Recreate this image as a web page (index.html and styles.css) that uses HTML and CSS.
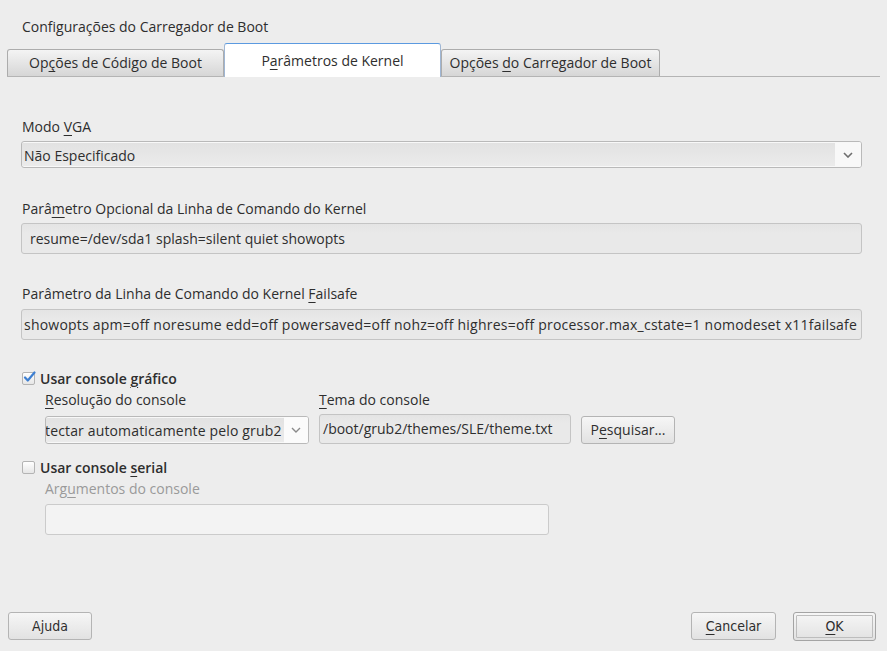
FILE: index.html
```html
<!DOCTYPE html>
<html lang="pt">
<head>
<meta charset="utf-8">
<title>Configurações do Carregador de Boot</title>
<link rel="stylesheet" href="styles.css">
</head>
<body>
<div class="dialog">
  <div class="title">Configurações do Carregador de Boot</div>
  <div class="tabs">
    <div class="tab">Op<u>ç</u>ões de Código de Boot</div>
    <div class="tab active">P<u>a</u>râmetros de Kernel</div>
    <div class="tab">Opções <u>d</u>o Carregador de Boot</div>
  </div>
  <div class="content">
    <div class="label l-vga">Modo <u>V</u>GA</div>
    <div class="combo combo-wide">
      <span class="combo-text">Não Especificado</span>
      <span class="combo-arrow"><svg width="10" height="6" viewBox="0 0 10 6"><path d="M1 1 L5 5 L9 1" fill="none" stroke="#6e6e6e" stroke-width="1.6"/></svg></span>
    </div>
    <div class="label l-opt">Parâ<u>m</u>etro Opcional da Linha de Comando do Kernel</div>
    <div class="field">resume=/dev/sda1 splash=silent quiet showopts</div>
    <div class="label l-fail">Parâmetro da Linha de Comando do Kernel <u>F</u>ailsafe</div>
    <div class="field field-fail">showopts apm=off noresume edd=off powersaved=off nohz=off highres=off processor.max_cstate=1 nomodeset x11failsafe</div>

    <div class="check l-gfx">
      <span class="box"><svg width="14" height="14" viewBox="0 0 14 14"><path d="M3 7.5 L5.8 10.5 L12.5 2.5" fill="none" stroke="#3d7fd1" stroke-width="2.2" stroke-linecap="round" stroke-linejoin="round"/></svg></span>
      <span class="check-text">Usar console <u>g</u>ráfico</span>
    </div>
    <div class="sub">
      <div class="sub-row labels">
        <div class="col-res"><u>R</u>esolução do console</div>
        <div class="col-theme"><u>T</u>ema do console</div>
      </div>
      <div class="sub-row controls">
        <div class="combo combo-res">
          <span class="combo-text clip"><span class="shift">tectar automaticamente pelo grub2</span></span>
          <span class="combo-arrow"><svg width="10" height="6" viewBox="0 0 10 6"><path d="M1 1 L5 5 L9 1" fill="none" stroke="#8a8a8a" stroke-width="1.4"/></svg></span>
        </div>
        <div class="field field-theme">/boot/grub2/themes/SLE/theme.txt</div>
        <div class="btn btn-search">P<u>e</u>squisar...</div>
      </div>
    </div>

    <div class="check l-serial">
      <span class="box"></span>
      <span class="check-text">Usar console <u>s</u>erial</span>
    </div>
    <div class="sub">
      <div class="label disabled l-args">Arg<u>u</u>mentos do console</div>
      <div class="field field-args"></div>
    </div>
  </div>
  <div class="footer">
    <div class="btn fbtn btn-help">Ajuda</div>
    <div class="spacer"></div>
    <div class="btn fbtn btn-cancel"><u>C</u>ancelar</div>
    <div class="btn fbtn btn-ok"><span class="ok-inner"><u>O</u>K</span></div>
  </div>
</div>
</body>
</html>
```
FILE: styles.css
```css
html, body {
  margin: 0;
  padding: 0;
  background: #ededed;
}
body {
  font-family: "Open Sans", "DejaVu Sans", sans-serif;
  font-size: 14px;
  color: #2e2e2e;
}
u {
  text-decoration: underline;
  text-underline-offset: 3px;
  text-decoration-thickness: 1px;
}
.dialog {
  height: 651px;
  display: flex;
  flex-direction: column;
  box-sizing: border-box;
}
.title {
  margin: 18px 0 0 22px;
  line-height: 18px;
  height: 18px;
}
.tabs {
  display: flex;
  align-items: flex-end;
  margin: 7px 7px 0 7px;
  height: 33px;
  border-bottom: 1px solid #b4b4b4;
}
.tab {
  box-sizing: border-box;
  width: 217px;
  height: 27px;
  line-height: 26px;
  text-align: center;
  background: linear-gradient(#f4f4f4, #d6d6d6);
  border: 1px solid #acacac;
  border-bottom: none;
  border-radius: 3px 3px 0 0;
  white-space: nowrap;
}
.tab:last-child {
  width: 219px;
}
.tab.active {
  height: 34px;
  line-height: 34px;
  margin-bottom: -1px;
  background: #ffffff;
  border-color: #9fb6d4;
  border-top: 1px solid #5b9ae0;
}
.content {
  display: flex;
  flex-direction: column;
  padding: 0 25px 0 21px;
}
.label {
  line-height: 18px;
  height: 18px;
  margin-left: 1px;
}
.l-vga { margin-top: 41px; }
.l-opt { margin-top: 32px; }
.l-fail { margin-top: 31px; }
.combo {
  display: flex;
  box-sizing: border-box;
  border: 1px solid #b9b9b9;
  border-radius: 3px;
  background: #f8f8f8;
  overflow: hidden;
}
.combo-wide {
  margin-top: 5px;
  height: 27px;
}
.combo-text {
  flex: 1;
  background: linear-gradient(#e2e2e2, #ebebeb);
  line-height: 25px;
  padding-left: 2px;
  white-space: nowrap;
  margin: 1px 0;
}
.combo-arrow {
  width: 26px;
  display: flex;
  align-items: center;
  justify-content: center;
  background: #f8f8f8;
}
.field {
  box-sizing: border-box;
  margin-top: 5px;
  height: 31px;
  line-height: 29px;
  padding-left: 8px;
  border: 1px solid #c4c4c4;
  border-radius: 3px;
  background: linear-gradient(#e4e4e4, #e9e9e9 30%, #e9e9e9);
  white-space: nowrap;
  overflow: hidden;
}
.field-fail {
  margin-top: 6px;
  padding-left: 2px;
  letter-spacing: 0.22px;
}
.check {
  display: flex;
  align-items: center;
  height: 18px;
  margin-left: 1px;
}
.l-gfx { margin-top: 29px; }
.l-serial { margin-top: 14px; }
.box {
  box-sizing: border-box;
  width: 13px;
  height: 13px;
  border: 1px solid #b4b4b4;
  border-radius: 2px;
  background: linear-gradient(#ffffff, #e6e6e6);
  margin-right: 5px;
  position: relative;
}
.box svg {
  position: absolute;
  left: -1px;
  top: -3px;
}
.check-text {
  font-weight: 600;
}
.sub {
  display: flex;
  flex-direction: column;
  margin-left: 24px;
}
.sub-row {
  display: flex;
}
.sub-row.labels {
  margin-top: 4px;
  height: 18px;
  line-height: 18px;
}
.col-res {
  width: 274px;
}
.sub-row.controls {
  margin-top: 5px;
  align-items: flex-start;
}
.combo-res {
  width: 264px;
  height: 28px;
  margin-top: 2px;
}
.combo-res .combo-text {
  line-height: 26px;
  overflow: hidden;
  padding-left: 0;
  letter-spacing: 0.15px;
}
.shift {
  display: inline-block;
  margin-left: -1px;
}
.combo-res .combo-arrow {
  width: 24px;
  background: #fbfbfb;
}
.field-theme {
  margin: 0 0 0 10px;
  width: 252px;
  height: 30px;
  padding-left: 3px;
  line-height: 28px;
}
.btn {
  box-sizing: border-box;
  border: 1px solid #b4b4b4;
  border-radius: 3px;
  background: linear-gradient(#f6f6f6, #e2e2e2);
  text-align: center;
  white-space: nowrap;
}
.btn-search {
  margin: 2px 0 0 10px;
  width: 94px;
  height: 28px;
  line-height: 26px;
}
.disabled {
  color: #9a9a9a;
}
.l-args {
  margin-top: 4px;
  margin-left: 0;
}
.field-args {
  margin-top: 6px;
  width: 504px;
  height: 31px;
  background: #f3f3f3;
  border-color: #cbcbcb;
}
.footer {
  margin-top: auto;
  display: flex;
  align-items: flex-start;
  padding: 0 11px 10px 8px;
  height: 29px;
}
.spacer {
  flex: 1;
}
.fbtn {
  font-family: "Liberation Sans Narrow", "DejaVu Sans Condensed", "DejaVu Sans", sans-serif;
  font-stretch: condensed;
  font-size: 14px;
  height: 28px;
  line-height: 26px;
}
.btn-help {
  width: 84px;
}
.btn-cancel {
  width: 85px;
}
.btn-ok {
  width: 83px;
  height: 29px;
  margin-left: 17px;
  padding: 2px;
  border-color: #a4a4a4;
  display: flex;
}
.ok-inner {
  flex: 1;
  border: 1px solid #bdbdbd;
  border-radius: 1px;
  line-height: 21px;
}
```
